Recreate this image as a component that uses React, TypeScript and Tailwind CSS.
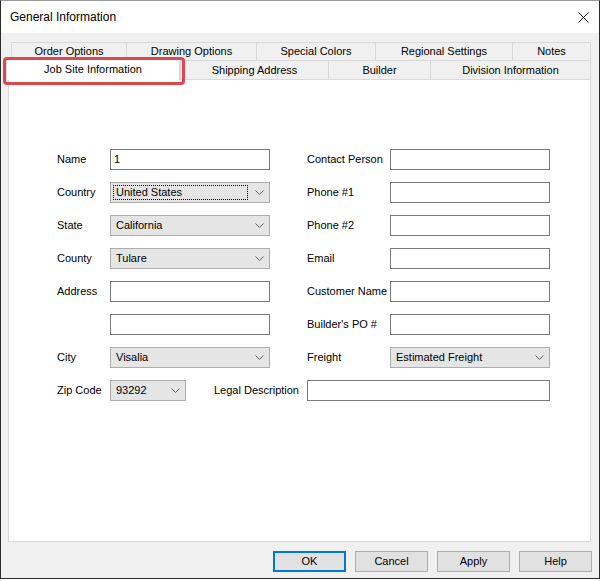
import React from "react";

const FONT = { fontFamily: '"Liberation Sans", Arial, sans-serif' };

function Chevron() {
  return (
    <svg width="9" height="5" viewBox="0 0 9 5" className="shrink-0">
      <path d="M0.5 0.5 L4.5 4.5 L8.5 0.5" fill="none" stroke="#606060" strokeWidth="1" />
    </svg>
  );
}

function TextBox({ value = "", width = "w-[160px]" }: { value?: string; width?: string }) {
  return (
    <div className={`${width} h-[21px] bg-white border border-[#7a7a7a] flex items-center pl-[3px] text-[11px] text-black`}>
      {value}
    </div>
  );
}

function Combo({ value, width = "w-[160px]", focused = false }: { value: string; width?: string; focused?: boolean }) {
  return (
    <div className={`${width} h-[21px] bg-[#e5e5e5] border border-[#adadad] flex items-center text-[11px] text-black`}>
      <div className="flex-1 h-full p-[2px]">
        <div
          className={`h-full flex items-center pl-[2px] ${
            focused ? "border border-dotted border-black" : "border border-transparent"
          }`}
        >
          {value}
        </div>
      </div>
      <div className="w-[19px] flex items-center justify-center">
        <Chevron />
      </div>
    </div>
  );
}

function Label({ text, width }: { text: string; width: string }) {
  return <div className={`${width} text-[11px] text-black`}>{text}</div>;
}

function Row({
  left,
  leftField,
  right,
  rightField,
}: {
  left: string;
  leftField: React.ReactNode;
  right: string;
  rightField: React.ReactNode;
}) {
  return (
    <div className="flex items-center h-[21px]">
      <Label text={left} width="w-[53px]" />
      {leftField}
      <div className="w-[37px]" />
      <Label text={right} width="w-[83px]" />
      {rightField}
    </div>
  );
}

const row1 = [
  { label: "Order Options", w: "w-[115px]" },
  { label: "Drawing Options", w: "w-[130px]" },
  { label: "Special Colors", w: "w-[119px]" },
  { label: "Regional Settings", w: "w-[137px]" },
  { label: "Notes", w: "w-[79px]" },
];

const row2 = [
  { label: "Shipping Address", w: "w-[148px]" },
  { label: "Builder", w: "w-[102px]" },
  { label: "Division Information", w: "w-[161px]" },
];

export default function App() {
  return (
    <div className="w-[601px] h-[581px] bg-white" style={FONT}>
      <div className="relative w-[600px] h-[579px] border border-[#2b2b2b] border-t-[#9a9a9a] flex flex-col">
        {/* title bar */}
        <div className="h-[32px] bg-white flex items-center justify-between pl-[9px] pr-[10px]">
          <span className="text-[12px] text-black">General Information</span>
          <svg width="11" height="11" viewBox="0 0 11 11">
            <path d="M0.5 0.5 L10.5 10.5 M10.5 0.5 L0.5 10.5" stroke="#111" strokeWidth="1" />
          </svg>
        </div>

        {/* body */}
        <div className="flex-1 bg-[#f0f0f0] flex flex-col pt-[9px]">
          <div className="flex ml-[10px] h-[18px]">
            {row1.map((t, i) => (
              <div
                key={t.label}
                className={`${t.w} h-full border-t border-l border-[#d9d9d9] ${
                  i === row1.length - 1 ? "border-r" : ""
                } bg-[#f0f0f0] flex items-center justify-center text-[11px] text-black`}
              >
                {t.label}
              </div>
            ))}
          </div>
          <div className="flex ml-[7px] h-[19px] relative z-10">
            <div className="w-[174px] h-[22px] -mt-[2px] -ml-[2px] bg-white border-t border-l border-r border-[#d9d9d9] flex items-center justify-center text-[11px] text-black">
              Job Site Information
            </div>
            {row2.map((t, i) => (
              <div
                key={t.label}
                className={`${t.w} h-full border-t border-l border-[#d9d9d9] ${
                  i === row2.length - 1 ? "border-r" : ""
                } bg-[#f0f0f0] flex items-center justify-center text-[11px] text-black`}
              >
                {t.label}
              </div>
            ))}
          </div>

          {/* panel */}
          <div className="ml-[7px] w-[583px] h-[463px] bg-white border border-[#d9d9d9] pt-[69px] pl-[48px] flex flex-col gap-[12px]">
            <Row left="Name" leftField={<TextBox value="1" />} right="Contact Person" rightField={<TextBox />} />
            <Row left="Country" leftField={<Combo value="United States" focused />} right="Phone #1" rightField={<TextBox />} />
            <Row left="State" leftField={<Combo value="California" />} right="Phone #2" rightField={<TextBox />} />
            <Row left="County" leftField={<Combo value="Tulare" />} right="Email" rightField={<TextBox />} />
            <Row left="Address" leftField={<TextBox />} right="Customer Name" rightField={<TextBox />} />
            <Row left="" leftField={<TextBox />} right="Builder's PO #" rightField={<TextBox />} />
            <Row left="City" leftField={<Combo value="Visalia" />} right="Freight" rightField={<Combo value="Estimated Freight" />} />
            <div className="flex items-center h-[21px]">
              <Label text="Zip Code" width="w-[53px]" />
              <Combo value="93292" width="w-[76px]" />
              <div className="w-[121px] text-right pr-[8px] text-[11px] text-black">Legal Description</div>
              <TextBox width="w-[243px]" />
            </div>
          </div>

          {/* buttons */}
          <div className="flex justify-end gap-[9px] pr-[7px] mt-[9px]">
            <button className="w-[73px] h-[21px] bg-[#e1e1e1] border-2 border-[#0078d7] text-[11px] text-black">OK</button>
            <button className="w-[73px] h-[21px] bg-[#e1e1e1] border border-[#adadad] text-[11px] text-black">Cancel</button>
            <button className="w-[73px] h-[21px] bg-[#e1e1e1] border border-[#adadad] text-[11px] text-black">Apply</button>
            <button className="w-[73px] h-[21px] bg-[#e1e1e1] border border-[#adadad] text-[11px] text-black">Help</button>
          </div>
        </div>

        {/* highlight annotation around the active tab */}
        <div className="absolute left-[2px] top-[56px] w-[182px] h-[28px] border-[3px] border-[#e0464e] rounded-[4px] z-20 pointer-events-none" />
      </div>
    </div>
  );
}
